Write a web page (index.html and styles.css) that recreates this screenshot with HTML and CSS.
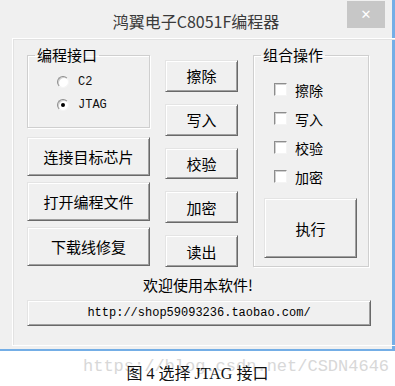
FILE: index.html
```html
<!DOCTYPE html>
<html lang="zh-CN">

<head>
  <meta charset="UTF-8">
  <title>鸿翼电子C8051F编程器</title>
  <link rel="stylesheet" href="styles.css">
</head>

<body>

  <div class="window">
    <div class="title-bar">
      <span></span>
      <h1 class="title">鸿翼电子C8051F编程器</h1>
      <button class="close">&#x2715;</button>
    </div>

    <div class="panel">
      <div class="col col-left">
        <fieldset class="group group-port">
          <legend>编程接口</legend>
          <div class="radio-list">
            <label class="radio-row"><span class="radio"></span><span class="mono">C2</span></label>
            <label class="radio-row"><span class="radio checked"></span><span class="mono">JTAG</span></label>
          </div>
        </fieldset>
        <button class="btn btn-wide">连接目标芯片</button>
        <button class="btn btn-wide">打开编程文件</button>
        <button class="btn btn-wide">下载线修复</button>
      </div>

      <div class="col col-mid">
        <button class="btn btn-small">擦除</button>
        <button class="btn btn-small">写入</button>
        <button class="btn btn-small">校验</button>
        <button class="btn btn-small">加密</button>
        <button class="btn btn-small">读出</button>
      </div>

      <fieldset class="group group-ops">
        <legend>组合操作</legend>
        <div class="check-list">
          <label class="check-row"><span class="check"></span>擦除</label>
          <label class="check-row"><span class="check"></span>写入</label>
          <label class="check-row"><span class="check"></span>校验</label>
          <label class="check-row"><span class="check"></span>加密</label>
        </div>
        <button class="btn btn-run">执行</button>
      </fieldset>

      <p class="welcome">欢迎使用本软件!</p>
      <div class="url-box">http://shop59093236.taobao.com/</div>
    </div>
  </div>

  <div class="caption">
    <span class="watermark">https://blog.csdn.net/CSDN4646</span>
    <span class="caption-text">图 4 选择 JTAG 接口</span>
  </div>

</body>

</html>
```

FILE: styles.css
```css
body {
  margin: 0;
  padding: 0;
  background-color: #fff;
  font-family: "Noto Sans CJK SC", "Liberation Sans", sans-serif;
  color: #000;
}

.window {
  width: 392px;
  height: 349px;
  background-color: #f0f0f0;
  border-right: 3px solid #74aee6;
  border-bottom: 2px solid #74aee6;
  display: flex;
  flex-direction: column;
}

.title-bar {
  height: 38px;
  display: grid;
  grid-template-columns: 1fr auto 1fr;
  align-items: start;
}

.title {
  margin: 0;
  padding-top: 10px;
  font-size: 16px;
  font-weight: normal;
  line-height: 22px;
  color: #3a3a3a;
}

.close {
  justify-self: end;
  width: 38px;
  height: 27px;
  margin: 1px 7px 0 0;
  padding: 0;
  border: none;
  background-color: #c7c7c7;
  color: #fff;
  font-size: 13px;
  font-family: "DejaVu Sans", sans-serif;
}

.panel {
  margin-left: 12px;
  width: 369px;
  height: 299px;
  border: 1px solid #fff;
  box-shadow: inset 1px 1px #e2e2e2;
  padding: 7px 0 0 14px;
  display: grid;
  grid-template-columns: 123px 73px 116px;
  grid-template-rows: 221px auto auto;
  column-gap: 15px;
  align-content: start;
}

.col {
  display: flex;
  flex-direction: column;
}

.col-left {
  gap: 6px;
}

.col-mid {
  padding-top: 14px;
  gap: 12px;
}

.group {
  margin: 0;
  padding: 0;
  border: 1px solid #cfcfcf;
  box-shadow: inset 1px 1px #fff, 1px 1px #fff;
  min-width: 0;
}

.group legend {
  margin-left: 7px;
  padding: 0 2px;
  font-size: 15px;
  line-height: 18px;
}

.group-port {
  height: 82px;
  box-sizing: border-box;
  margin-bottom: 3px;
}

.radio-list {
  padding: 6px 0 0 29px;
}

.radio-row {
  display: flex;
  align-items: center;
  gap: 9px;
  height: 23px;
}

.radio {
  width: 10px;
  height: 10px;
  border-radius: 50%;
  border: 1px solid;
  border-color: #8d8d8d #f4f4f4 #f4f4f4 #8d8d8d;
  box-shadow: inset 1px 1px #d0d0d0;
  background-color: #fff;
  display: flex;
  align-items: center;
  justify-content: center;
}

.radio.checked::after {
  content: "";
  width: 4px;
  height: 4px;
  border-radius: 50%;
  background-color: #000;
}

.mono {
  font-family: "Liberation Mono", monospace;
  font-size: 12px;
  color: #111;
}

.btn {
  margin: 0;
  padding: 0;
  background-color: #f0f0f0;
  border: 1px solid;
  border-color: #e4e4e4 #696969 #696969 #e4e4e4;
  box-shadow: inset 1px 1px #fff, inset -1px -1px #a0a0a0;
  font-family: "Noto Sans CJK SC", sans-serif;
  font-size: 15px;
  color: #000;
}

.btn-wide {
  height: 39px;
}

.btn-small {
  height: 32px;
}

.group-ops {
  height: 221px;
  box-sizing: border-box;
  display: flex;
  flex-direction: column;
}

.check-list {
  padding: 11px 0 0 20px;
}

.check-row {
  display: flex;
  align-items: center;
  gap: 8px;
  height: 29px;
  font-size: 14px;
}

.check {
  width: 11px;
  height: 11px;
  border: 1px solid;
  border-color: #8d8d8d #f4f4f4 #f4f4f4 #8d8d8d;
  box-shadow: inset 1px 1px #d0d0d0;
  background-color: #fff;
}

.btn-run {
  margin: 7px 0 0 10px;
  width: 93px;
  height: 60px;
}

.welcome {
  grid-column: 1 / -1;
  margin: 8px 0 0;
  text-align: center;
  font-size: 15px;
  line-height: 20px;
}

.url-box {
  grid-column: 1 / -1;
  margin-top: 5px;
  width: 344px;
  height: 26px;
  box-sizing: border-box;
  border: 1px solid;
  border-color: #e4e4e4 #696969 #696969 #e4e4e4;
  box-shadow: inset 1px 1px #fff, inset -1px -1px #a0a0a0;
  font-family: "Liberation Mono", monospace;
  font-size: 12px;
  line-height: 24px;
  text-align: center;
}

.caption {
  position: relative;
  height: 35px;
  text-align: center;
}

.watermark {
  position: absolute;
  left: 83px;
  top: 6px;
  font-family: "Liberation Mono", monospace;
  font-size: 17px;
  color: #d8d8d8;
  white-space: nowrap;
}

.caption-text {
  position: relative;
  display: inline-block;
  padding-top: 13px;
  font-family: "Liberation Serif", "Noto Sans CJK SC", serif;
  font-size: 16px;
  line-height: 20px;
  color: #111;
}
```
